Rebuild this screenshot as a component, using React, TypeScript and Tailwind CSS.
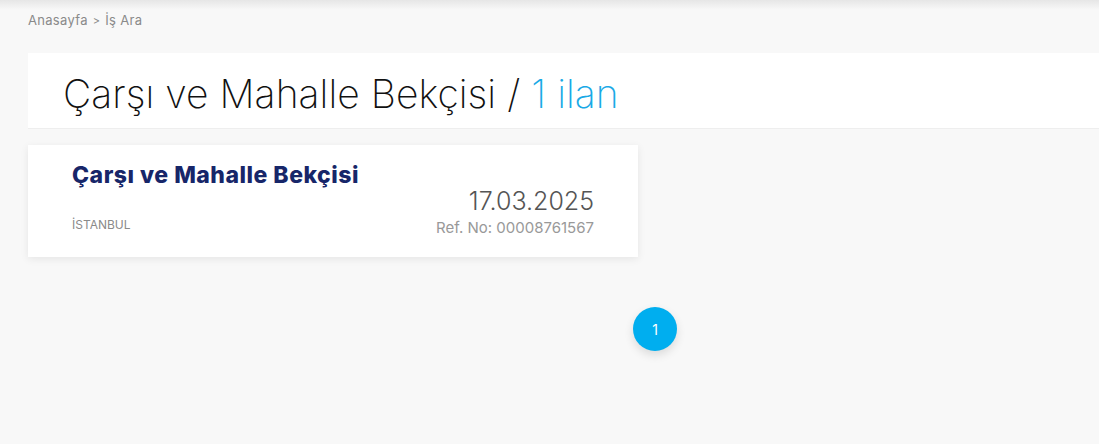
export default function App() {
  return (
    <div className="w-[1099px] h-[444px] overflow-hidden bg-[#f8f8f8] relative" style={{ fontFamily: "Inter, 'Open Sans', sans-serif" }}>
      <div className="h-[10px] bg-gradient-to-b from-[#e6e6e6] to-[#f8f8f8]" />
      <div className="w-[1254px] ml-[28px]">
        <div className="h-[20px] flex items-center text-[13px] text-[#8a8a8a] gap-[5px] mt-[1px] tracking-[0.3px]">
          <span>Anasayfa</span>
          <span className="text-[11px]">&gt;</span>
          <span>İş Ara</span>
        </div>
        <div className="mt-[22px] h-[76px] bg-white flex items-center pl-[35px] border-b border-[#eeeeee]">
          <h1 className="text-[39px] font-extralight text-[#111] tracking-[0.05px] leading-none pt-[5px]">
            Çarşı ve Mahalle Bekçisi / <span className="text-[#1aa9e6]">1 ilan</span>
          </h1>
        </div>
        <div className="mt-[16px] w-[610px] h-[112px] bg-white shadow-[0_2px_8px_rgba(0,0,0,0.08)] px-[44px] pt-[15px] flex justify-between">
          <div className="flex flex-col">
            <div className="text-[23px] font-extrabold text-[#172669] leading-[30px] tracking-[0.5px]">Çarşı ve Mahalle Bekçisi</div>
            <div className="mt-[26px] text-[12px] text-[#8a8a8a]">İSTANBUL</div>
          </div>
          <div className="flex flex-col items-end pt-[26px]">
            <div className="text-[25px] font-light text-[#555] leading-[30px]">17.03.2025</div>
            <div className="text-[15px] text-[#999] leading-[20px] mt-[2px]">Ref. No: 00008761567</div>
          </div>
        </div>
        <div className="mt-[50px] flex justify-center">
          <div className="w-[44px] h-[44px] rounded-full bg-[#00aeef] text-white text-[14px] flex items-center justify-center shadow-[0_4px_10px_rgba(0,0,0,0.12)]">1</div>
        </div>
      </div>
    </div>
  );
}
